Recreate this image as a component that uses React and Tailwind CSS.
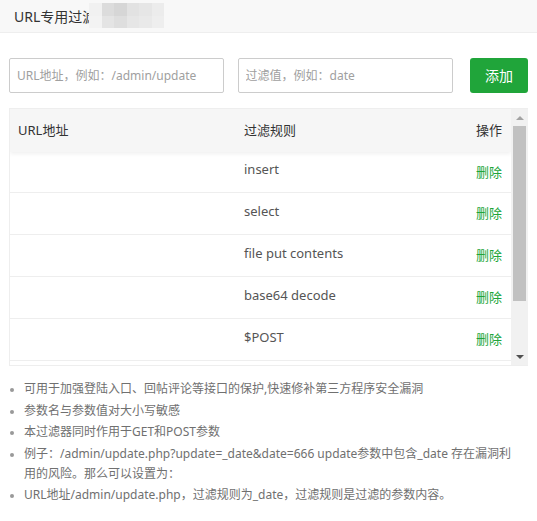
import React from "react";

const rules = ["insert", "select", "file put contents", "base64 decode", "$POST", ""];

const mosaic = [
  ["#f1f1f1", "#dcdcdc", "#d6d6d6", "#e2e2e2", "#e6e6e6", "#ececec"],
  ["#f3f3f3", "#e4e4e4", "#dedede", "#e6e6e6", "#e9e9e9", "#eeeeee"],
];

export default function App() {
  return (
    <div
      className="relative w-[537px] h-[521px] overflow-hidden bg-white"
      style={{ fontFamily: '"Noto Sans", "Noto Sans CJK SC", sans-serif' }}
    >
      {/* close button corner */}
      <div className="absolute top-[-27px] right-[-27px] w-[34px] h-[34px] rounded-full bg-[#5a5a5a]" />

      {/* title bar */}
      <div className="relative flex items-center h-[33px] bg-[#f8f8f8] border-b border-[#eeeeee] pl-[14px] text-[14px] text-[#333]">
        <span>URL专用过滤</span>
        <div className="absolute left-[89px] top-[3px] grid grid-cols-6 w-[75px] h-[25px] blur-[0.6px]">
          {mosaic.flat().map((c, i) => (
            <div key={i} style={{ backgroundColor: c }} />
          ))}
        </div>
      </div>

      <div className="px-[9px] pt-[25px]">
        {/* inputs row */}
        <div className="flex h-[35px]">
          <input
            className="w-[215px] h-full border border-[#cccccc] rounded-[2px] px-[7px] text-[12px] text-[#555] placeholder:text-[#a0a0a0] outline-none"
            placeholder="URL地址，例如：/admin/update"
          />
          <input
            className="ml-[14px] w-[216px] h-full border border-[#cccccc] rounded-[2px] px-[7px] text-[12px] text-[#555] placeholder:text-[#a0a0a0] outline-none"
            placeholder="过滤值，例如：date"
          />
          <button className="ml-[17px] w-[58px] h-full rounded-[3px] bg-[#20a53a] text-white text-[14px]">
            添加
          </button>
        </div>

        {/* table */}
        <div className="mt-[15px] w-[519px] h-[258px] flex border-t border-l border-b border-[#eeeeee] overflow-hidden">
          <div className="flex-1 flex flex-col overflow-hidden">
            <div className="relative z-10 flex items-center h-[43px] shrink-0 bg-[#f6f6f6] shadow-[0_2px_4px_rgba(0,0,0,0.06)] text-[13px] text-[#333] pl-[8px] pr-[9px]">
              <div className="w-[226px]">URL地址</div>
              <div className="flex-1">过滤规则</div>
              <div>操作</div>
            </div>
            {rules.map((r, i) => (
              <div
                key={i}
                className={`flex items-center shrink-0 border-b border-[#eeeeee] pl-[8px] pr-[9px] text-[13px] ${
                  i === 0 ? "h-[41px]" : "h-[42px]"
                }`}
              >
                <div className="w-[226px]" />
                <div className="flex-1 text-[#555] pb-[4px]">{r}</div>
                {r && <div className="text-[#20a53a] pt-[1px]">删除</div>}
              </div>
            ))}
          </div>
          {/* scrollbar */}
          <div className="w-[17px] shrink-0 bg-[#f1f1f1] flex flex-col items-center">
            <div className="h-[17px] w-full flex items-center justify-center">
              <div className="w-0 h-0 border-l-[4px] border-r-[4px] border-b-[4px] border-l-transparent border-r-transparent border-b-[#a3a3a3]" />
            </div>
            <div className="w-[13px] h-[175px] bg-[#c1c1c1]" />
            <div className="flex-1" />
            <div className="h-[17px] w-full flex items-center justify-center">
              <div className="w-0 h-0 border-l-[4px] border-r-[4px] border-t-[4px] border-l-transparent border-r-transparent border-t-[#505050]" />
            </div>
          </div>
        </div>

        {/* notes */}
        <ul className="mt-[13px] text-[12px] text-[#707070] leading-[20px] flex flex-col gap-[1.5px]">
          {[
            "可用于加强登陆入口、回帖评论等接口的保护,快速修补第三方程序安全漏洞",
            "参数名与参数值对大小写敏感",
            "本过滤器同时作用于GET和POST参数",
            null,
            "URL地址/admin/update.php，过滤规则为_date，过滤规则是过滤的参数内容。",
          ].map((t, i) => (
            <li key={i} className="flex">
              <span className="w-[15px] shrink-0 flex justify-start pl-[1px] pt-[9px]">
                <span className="block w-[4px] h-[4px] rounded-full bg-[#999]" />
              </span>
              {t !== null ? (
                <span className="whitespace-nowrap">{t}</span>
              ) : (
                <span className="whitespace-nowrap">
                  例子：/admin/update.php?update=_date&amp;date=666 update参数中包含_date 存在漏洞利
                  <br />
                  用的风险。那么可以设置为：
                </span>
              )}
            </li>
          ))}
        </ul>
      </div>
    </div>
  );
}
